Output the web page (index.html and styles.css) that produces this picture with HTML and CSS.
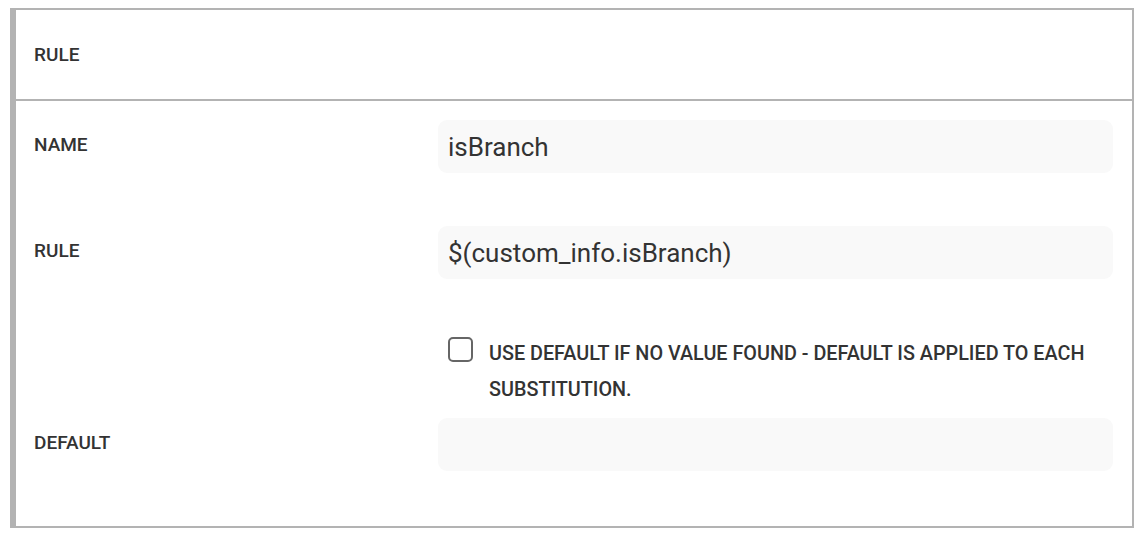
FILE: index.html
```html
<!DOCTYPE html>
<html lang="en">
<head>
    <meta charset="UTF-8">
    <title>Rule</title>
    <link rel="stylesheet" href="styles.css">
</head>
<body>
    <div class="panel">
        <div class="panel-header">RULE</div>
        <div class="panel-body">
            <div class="row">
                <label class="label">NAME</label>
                <div class="field">isBranch</div>
            </div>
            <div class="row">
                <label class="label">RULE</label>
                <div class="field">$(custom_info.isBranch)</div>
            </div>
            <div class="check-row">
                <span class="box"></span>
                <span class="check-text">USE DEFAULT IF NO VALUE FOUND - DEFAULT IS APPLIED TO EACH SUBSTITUTION.</span>
            </div>
            <div class="row row-last">
                <label class="label">DEFAULT</label>
                <div class="field"></div>
            </div>
        </div>
    </div>
</body>
</html>
```

FILE: styles.css
```css
* {
    margin: 0;
    padding: 0;
    box-sizing: border-box;
}

body {
    background-color: #fff;
    font-family: Roboto, "Liberation Sans", sans-serif;
    color: #333;
    padding: 8px 8px 0 10px;
}

.panel {
    width: 1124px;
    border: 2px solid #b3b3b3;
    border-left-width: 6px;
}

.panel-header {
    height: 91px;
    border-bottom: 2px solid #b3b3b3;
    display: flex;
    align-items: center;
    padding-left: 18px;
    font-size: 19px;
    font-weight: 500;
}

.panel-body {
    padding: 19px 19px 55px 18px;
}

.row {
    display: grid;
    grid-template-columns: 404px 1fr;
    align-items: center;
    margin-bottom: 53px;
}

.row-last {
    margin-bottom: 0;
}

.label {
    font-size: 19px;
    font-weight: 500;
    margin-top: -4px;
}

.field {
    height: 53px;
    background-color: #f9f9f9;
    border-radius: 9px;
    padding: 0 10px;
    font-size: 26px;
    line-height: 54px;
}

.check-row {
    display: flex;
    align-items: flex-start;
    margin: 0 0 10px 414px;
}

.box {
    flex: none;
    width: 25px;
    height: 25px;
    border: 2px solid #666;
    border-radius: 5px;
    margin-top: 5px;
}

.check-text {
    margin: 4px 0 0 16px;
    font-size: 19.8px;
    font-weight: 500;
    line-height: 36px;
    padding-right: 20px;
}
```
